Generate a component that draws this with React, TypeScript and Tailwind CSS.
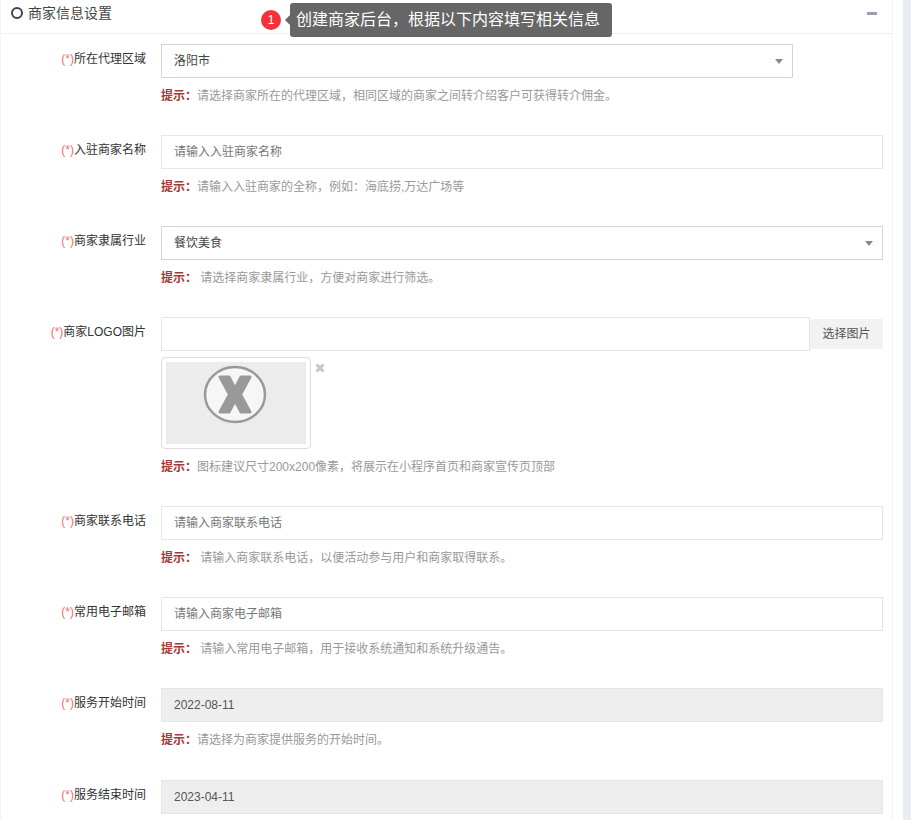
import React from 'react';

const font = { fontFamily: '"Liberation Sans", "Noto Sans CJK SC", sans-serif' };

const Label = ({ text }: { text: string }) => (
  <label className="w-[145px] shrink-0 pt-[7px] text-right text-[12px] leading-[17px] text-[#333]">
    <span className="text-[#f0706a]">(*)</span>
    {text}
  </label>
);

const Hint = ({ text, space }: { text: string; space?: boolean }) => (
  <p className="mt-[10px] h-[17px] text-[12px] leading-[17px] text-[#999]">
    <strong className="font-bold text-[#a33a3a]">提示：</strong>
    {space ? ' ' : ''}
    {text}
  </p>
);

const TextField = ({ placeholder }: { placeholder: string }) => (
  <div className="flex h-[34px] items-center border border-[#e5e6e7] bg-white px-[12px] text-[12px] text-[#777]">
    {placeholder}
  </div>
);

const DateField = ({ value }: { value: string }) => (
  <div className="flex h-[34px] items-center border border-[#e5e6e7] bg-[#eeeeee] px-[12px] text-[12px] text-[#555]">
    {value}
  </div>
);

const SelectField = ({ value, className }: { value: string; className: string }) => (
  <div className={`flex h-[34px] items-center justify-between border border-[#d2d4de] bg-white pl-[12px] pr-[9px] text-[12px] text-[#444] ${className}`}>
    <span>{value}</span>
    <svg width="8" height="5" viewBox="0 0 8 5">
      <path d="M0 0h8L4 5z" fill="#888" />
    </svg>
  </div>
);

const Row = ({ label, className, children }: { label: string; className: string; children: React.ReactNode }) => (
  <div className={`flex gap-[15px] ${className}`}>
    <Label text={label} />
    <div className="w-[722px] shrink-0">{children}</div>
  </div>
);

const BrokenImage = () => (
  <svg width="64" height="59" viewBox="0 0 64 59">
    <ellipse cx="32" cy="29.5" rx="30" ry="27.5" fill="#f6f6f6" stroke="#999" strokeWidth="2.5" />
    <path
      d="M17 12H26L32 23.5L38 12H47L37.5 29.5L47 47H38L32 35.5L26 47H17L26.5 29.5Z"
      fill="#999"
      stroke="#999"
      strokeWidth="3"
      strokeLinejoin="round"
    />
  </svg>
);

export default function App() {
  return (
    <div className="relative h-[820px] w-[911px] overflow-hidden bg-[#e9edf3]" style={font}>
      <div className="h-[820px] w-[903px] bg-white">
        <div className="h-[820px] w-[893px] border-l border-r border-[#f5f5f5] bg-white">
          {/* Section header */}
          <div className="flex h-[34px] items-center justify-between border-b border-[#f0f0f0] pl-[10px] pr-[15px]">
            <div className="flex items-center gap-[5px] pb-[8px] text-[14px] leading-[20px] text-[#444]">
              <span className="h-[12px] w-[12px] rounded-full border-2 border-[#3d4450]" />
              <span>商家信息设置</span>
            </div>
            <span className="mb-[7px] h-[3px] w-[10px] bg-[#9a9dae]" />
          </div>

          <div className="pt-[10px]">
            <Row label="所在代理区域" className="h-[91px]">
              <SelectField value="洛阳市" className="w-[632px]" />
              <Hint text="请选择商家所在的代理区域，相同区域的商家之间转介绍客户可获得转介佣金。" />
            </Row>

            <Row label="入驻商家名称" className="h-[91px]">
              <TextField placeholder="请输入入驻商家名称" />
              <Hint text="请输入入驻商家的全称，例如：海底捞,万达广场等" />
            </Row>

            <Row label="商家隶属行业" className="h-[91px]">
              <SelectField value="餐饮美食" className="w-full" />
              <Hint text="请选择商家隶属行业，方便对商家进行筛选。" space />
            </Row>

            <Row label="商家LOGO图片" className="h-[189px]">
              <div className="flex items-start">
                <div className="h-[34px] flex-1 border border-[#e5e6e7] bg-white" />
                <div className="mt-[2px] flex h-[30px] w-[73px] items-center justify-center bg-[#f2f2f2] text-[12px] text-[#555]">
                  选择图片
                </div>
              </div>
              <div className="mt-[6px] flex items-start">
                <div className="h-[92px] w-[150px] rounded-[4px] border border-[#ddd] bg-white p-[4px]">
                  <div className="flex h-[82px] items-start justify-center bg-[#ececec] pr-[2px] pt-[3px]">
                    <BrokenImage />
                  </div>
                </div>
                <svg className="ml-[4px] mt-[6px]" width="10" height="10" viewBox="0 0 10 10">
                  <path d="M1.5 1.5l7 7M8.5 1.5l-7 7" stroke="#c0c4cc" strokeWidth="2.8" />
                </svg>
              </div>
              <Hint text="图标建议尺寸200x200像素，将展示在小程序首页和商家宣传页顶部" />
            </Row>

            <Row label="商家联系电话" className="h-[91px]">
              <TextField placeholder="请输入商家联系电话" />
              <Hint text="请输入商家联系电话，以便活动参与用户和商家取得联系。" space />
            </Row>

            <Row label="常用电子邮箱" className="h-[91px]">
              <TextField placeholder="请输入商家电子邮箱" />
              <Hint text="请输入常用电子邮箱，用于接收系统通知和系统升级通告。" space />
            </Row>

            <Row label="服务开始时间" className="h-[92px]">
              <DateField value="2022-08-11" />
              <Hint text="请选择为商家提供服务的开始时间。" />
            </Row>

            <Row label="服务结束时间" className="h-[91px]">
              <DateField value="2023-04-11" />
            </Row>
          </div>
        </div>
      </div>

      {/* Guide tooltip */}
      <div className="absolute left-[261px] top-[10px] flex h-[20px] w-[20px] items-center justify-center rounded-full bg-[#f5313a] text-[12px] text-white">
        1
      </div>
      <div className="absolute left-[290px] top-[3px] flex h-[34px] w-[322px] items-center rounded-[3px] bg-[#666] pl-[6px] text-[16px] text-white">
        <span className="absolute left-[-5px] top-[12px] h-0 w-0 border-y-[5px] border-r-[5px] border-y-transparent border-r-[#666]" />
        创建商家后台，根据以下内容填写相关信息
      </div>
    </div>
  );
}
